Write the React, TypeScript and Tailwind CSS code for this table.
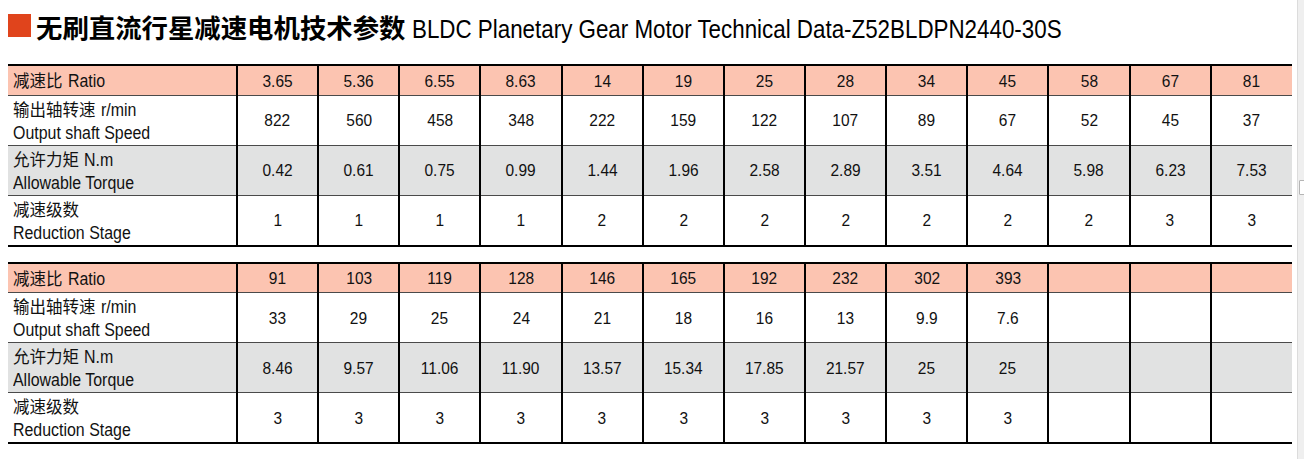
const FONT = "font-['Liberation_Sans','Noto_Sans_CJK_SC',sans-serif]";

type Row = { zh: string; en: string; unit?: string; values: string[] };

const table1: Row[] = [
  { zh: "减速比", en: "Ratio", values: ["3.65", "5.36", "6.55", "8.63", "14", "19", "25", "28", "34", "45", "58", "67", "81"] },
  { zh: "输出轴转速", unit: "r/min", en: "Output shaft Speed", values: ["822", "560", "458", "348", "222", "159", "122", "107", "89", "67", "52", "45", "37"] },
  { zh: "允许力矩", unit: "N.m", en: "Allowable Torque", values: ["0.42", "0.61", "0.75", "0.99", "1.44", "1.96", "2.58", "2.89", "3.51", "4.64", "5.98", "6.23", "7.53"] },
  { zh: "减速级数", en: "Reduction Stage", values: ["1", "1", "1", "1", "2", "2", "2", "2", "2", "2", "2", "3", "3"] },
];

const table2: Row[] = [
  { zh: "减速比", en: "Ratio", values: ["91", "103", "119", "128", "146", "165", "192", "232", "302", "393", "", "", ""] },
  { zh: "输出轴转速", unit: "r/min", en: "Output shaft Speed", values: ["33", "29", "25", "24", "21", "18", "16", "13", "9.9", "7.6", "", "", ""] },
  { zh: "允许力矩", unit: "N.m", en: "Allowable Torque", values: ["8.46", "9.57", "11.06", "11.90", "13.57", "15.34", "17.85", "21.57", "25", "25", "", "", ""] },
  { zh: "减速级数", en: "Reduction Stage", values: ["3", "3", "3", "3", "3", "3", "3", "3", "3", "3", "", "", ""] },
];

const rowBg = ["bg-[#fcc4b1]", "bg-white", "bg-[#e1e2e2]", "bg-white"];

// condensed look: Liberation Sans squeezed horizontally
function Narrow({ children, origin = "origin-center" }: { children: React.ReactNode; origin?: string }) {
  return <span className={`inline-block whitespace-nowrap scale-x-[0.91] ${origin}`}>{children}</span>;
}

function Zh({ children }: { children: React.ReactNode }) {
  return <span className="mr-[5px] text-[16.5px]">{children}</span>;
}

function DataTable({ rows }: { rows: Row[] }) {
  return (
    <table className="w-[1284px] table-fixed border-collapse border-t-2 border-b-2 border-black text-[17.5px] text-[#111]">
      <colgroup>
        <col className="w-[229px]" />
        {rows[0].values.map((_, i) => (
          <col key={i} />
        ))}
      </colgroup>
      <tbody>
        {rows.map((r, ri) => (
          <tr key={ri} className={`${rowBg[ri]} ${ri === 0 ? "h-[30px]" : "h-[50px]"} ${ri < 3 ? "border-b border-[#4a4a4a]" : ""}`}>
            <td className="border-r-2 border-black pl-[5px] pt-[3px] align-middle leading-[23px]">
              {ri === 0 ? (
                <div className="flex items-baseline whitespace-nowrap">
                  <Zh>{r.zh}</Zh>
                  <Narrow origin="origin-left">{r.en}</Narrow>
                </div>
              ) : (
                <>
                  <div className="flex items-baseline whitespace-nowrap">
                    <Zh>{r.zh}</Zh>
                    {r.unit && <Narrow origin="origin-left">{r.unit}</Narrow>}
                  </div>
                  <div>
                    <Narrow origin="origin-left">{r.en}</Narrow>
                  </div>
                </>
              )}
            </td>
            {r.values.map((v, vi) => (
              <td key={vi} className={`pt-[2px] text-center align-middle text-[17px] ${vi < 12 ? "border-r-2 border-black" : ""}`}>
                <Narrow>{v}</Narrow>
              </td>
            ))}
          </tr>
        ))}
      </tbody>
    </table>
  );
}

export default function App() {
  return (
    <div className={`flex h-[459px] w-[1304px] bg-white ${FONT}`}>
      <div className="flex-1 pl-[8px]">
        <div className="flex h-[64px] items-start pt-[13px]">
          <div className="mt-[1px] h-[23px] w-[23px] bg-[#e0441c]" />
          <h1 className="ml-[5px] flex items-baseline whitespace-nowrap leading-[28px] text-black">
            <span className="font-['Noto_Sans_CJK_SC',sans-serif] text-[26.4px] font-bold">无刷直流行星减速电机技术参数</span>
            <span className="ml-[7px] inline-block origin-left scale-x-[0.86] text-[26px]">
              BLDC Planetary Gear Motor Technical Data-Z52BLDPN2440-30S
            </span>
          </h1>
        </div>
        <DataTable rows={table1} />
        <div className="h-[15px]" />
        <DataTable rows={table2} />
      </div>
      <div className="relative w-[7px] border-l border-[#dcdcdc] bg-[#efefef]">
        <div className="absolute left-[1px] top-[180px] h-[15px] w-[6px] rounded-[1px] border border-[#b5b5b5] bg-white" />
      </div>
    </div>
  );
}
